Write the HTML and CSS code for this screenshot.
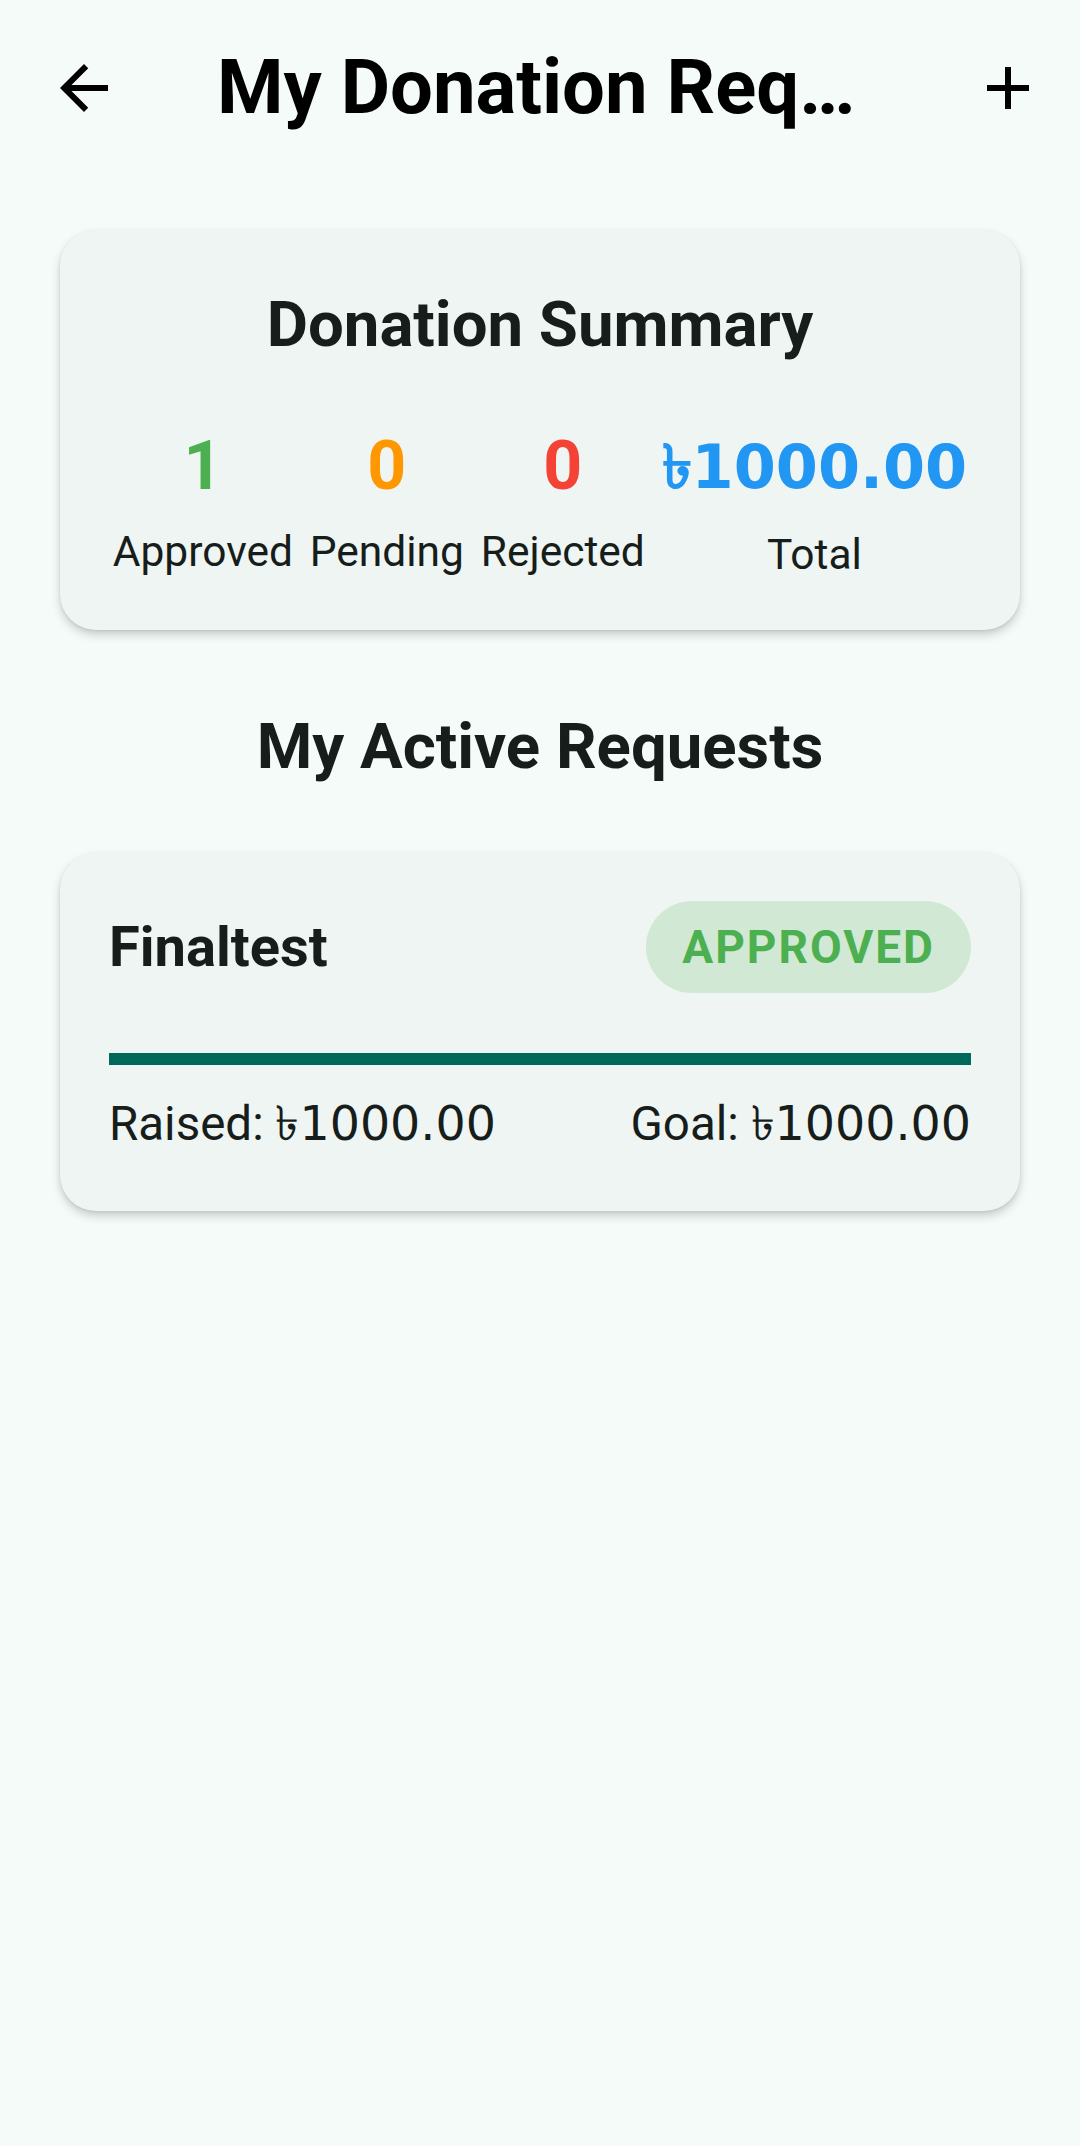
FILE: index.html
```html
<!DOCTYPE html>
<html lang="en">
<head>
<meta charset="utf-8">
<title>My Donation Requests</title>
<link rel="stylesheet" href="styles.css">
</head>
<body>
<header class="appbar">
  <button class="icon-btn" aria-label="Back">
    <svg viewBox="0 0 24 24" width="72" height="72"><path d="M20 11H7.83l5.59-5.59L12 4l-8 8 8 8 1.41-1.41L7.83 13H20v-2z"/></svg>
  </button>
  <h1 class="title">My Donation Requests</h1>
  <button class="icon-btn" aria-label="Add">
    <svg viewBox="0 0 24 24" width="72" height="72"><path d="M19 13h-6v6h-2v-6H5v-2h6V5h2v6h6v2z"/></svg>
  </button>
</header>
<main class="content">
  <section class="card summary">
    <h2 class="card-title">Donation Summary</h2>
    <div class="stats">
      <div class="stat">
        <span class="stat-num green">1</span>
        <span class="stat-label">Approved</span>
      </div>
      <div class="stat">
        <span class="stat-num orange">0</span>
        <span class="stat-label">Pending</span>
      </div>
      <div class="stat">
        <span class="stat-num red">0</span>
        <span class="stat-label">Rejected</span>
      </div>
      <div class="stat stat-total">
        <span class="stat-num blue amount">৳1000.00</span>
        <span class="stat-label">Total</span>
      </div>
    </div>
  </section>

  <h2 class="section-title">My Active Requests</h2>

  <section class="card request">
    <div class="request-head">
      <span class="request-name">Finaltest</span>
      <span class="badge">APPROVED</span>
    </div>
    <div class="progress"><div class="progress-fill" style="width:100%"></div></div>
    <div class="request-foot">
      <span>Raised: <span class="amount">৳1000.00</span></span>
      <span>Goal: <span class="amount">৳1000.00</span></span>
    </div>
  </section>
</main>
</body>
</html>
```

FILE: styles.css
```css
* { box-sizing: border-box; }

html, body {
  margin: 0;
  padding: 0;
}

body {
  width: 1080px;
  min-height: 2146px;
  background: #f4fbf8;
  font-family: Roboto, "Noto Sans", "DejaVu Sans", sans-serif;
  color: #171d1b;
}

.appbar {
  height: 176px;
  display: flex;
  align-items: center;
  padding: 0 36px 0 48px;
}

.icon-btn {
  width: 72px;
  height: 72px;
  padding: 0;
  border: 0;
  background: none;
  display: flex;
  align-items: center;
  justify-content: center;
}

.icon-btn svg { fill: #000; display: block; }

.title {
  margin: 0 0 0 97px;
  width: 655px;
  font-size: 76px;
  font-weight: 700;
  line-height: 1.2;
  color: #000;
  white-space: nowrap;
  overflow: hidden;
  text-overflow: ellipsis;
  flex: none;
}

.appbar .icon-btn:last-child { margin-left: auto; }

.content {
  padding: 0 60px;
}

.card {
  background: #eef5f2;
  border-radius: 36px;
  box-shadow: 0 5px 10px rgba(0, 0, 0, 0.18), 0 1px 3px rgba(0, 0, 0, 0.08);
}

.summary {
  margin-top: 54px;
  height: 400px;
  padding-top: 57px;
}

.card-title, .section-title {
  margin: 0;
  text-align: center;
  font-size: 63.5px;
  font-weight: 700;
  line-height: 1.2;
}

.stats {
  margin-top: 60px;
  display: flex;
  justify-content: space-evenly;
  align-items: center;
  padding: 0 36px;
}

.stat {
  display: flex;
  flex-direction: column;
  align-items: center;
}

.stat-num {
  font-size: 68px;
  font-weight: 700;
  line-height: 1.2;
}

.stat-label {
  margin-top: 18px;
  font-size: 42.5px;
  line-height: 1.2;
}

.stat-total .stat-num {
  font-size: 60.5px;
  line-height: 88px;
}

.amount {
  font-family: "DejaVu Sans", Roboto, sans-serif;
}

.green { color: #4caf50; }
.orange { color: #ff9800; }
.red { color: #f44336; }
.blue { color: #2196f3; }

.section-title {
  margin-top: 79px;
}

.request {
  margin-top: 68px;
  padding: 48px 49px 58px 49px;
}

.request-head {
  display: flex;
  align-items: center;
  justify-content: space-between;
}

.request-name {
  font-size: 56px;
  font-weight: 700;
  line-height: 1.2;
}

.badge {
  height: 92px;
  display: flex;
  align-items: center;
  padding: 0 36px;
  border-radius: 46px;
  background: #d0e8d4;
  color: #4caf50;
  font-size: 46px;
  font-weight: 700;
  letter-spacing: 2px;
}

.progress {
  margin-top: 60px;
  height: 12px;
  background: #b2dfdb;
}

.progress-fill {
  height: 100%;
  background: #00695c;
}

.request-foot {
  margin-top: 30px;
  display: flex;
  justify-content: space-between;
  font-size: 47.5px;
  line-height: 1.2;
}
```
